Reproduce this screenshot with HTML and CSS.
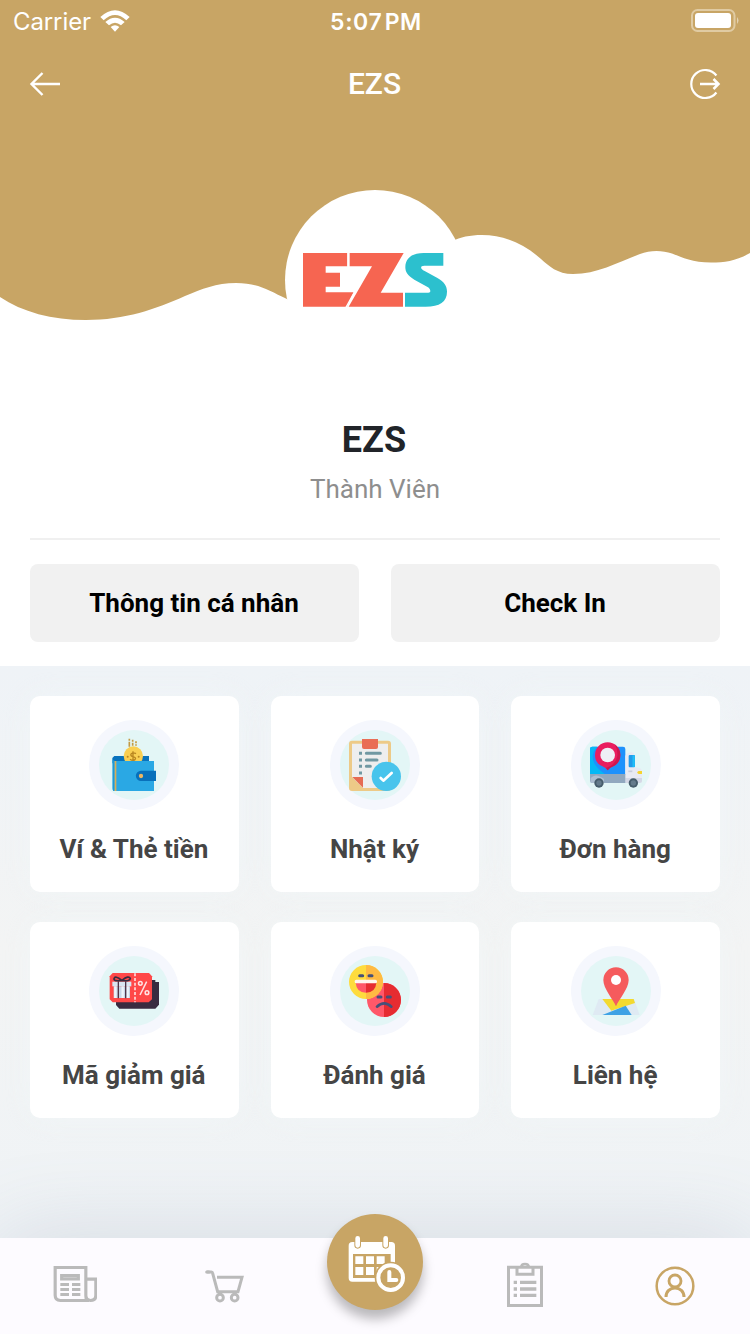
FILE: index.html
```html
<!DOCTYPE html>
<html lang="vi">
<head>
<meta charset="utf-8">
<title>EZS</title>
<link rel="stylesheet" href="styles.css">
</head>
<body>
<div class="app">
  <header class="hero">
    <svg class="wave" viewBox="0 0 750 330"><path fill="#c8a565" d="M0 0H750V253C736 261 725 262.500 711 262.500C692 262.500 681 257 672 253.500C662 250 650 250 640 254C616 263 597 274 573 274C557 274 549 266 541 259C523 243 503 235 482 235C440 235 430 262 405 283C375 308 312 318 287 299C268 290 258 283 236 283C216 283 202 289 185 296C156 309 125 320 86 320C52 320 22 312 0 297Z"/></svg>
    <div class="status">
      <div class="carrier"><span>Carrier</span>
        <svg width="30" height="22" viewBox="0 0 90 66" fill="#fff"><path d="M1 21Q45-20 89 21L79 31Q45-1 11 31Z"/><path d="M16 36Q45 10 74 36L63 46Q45 31 27 46Z"/><path d="M32 51Q45 41 58 51L45 65Z"/></svg>
      </div>
      <div class="time">5:07 PM</div>
      <div class="battery"><svg width="48" height="24" viewBox="0 0 48 24"><rect x="1" y="1" width="42.500" height="21" rx="5.500" fill="none" stroke="#e0cba3" stroke-width="2"/><rect x="4" y="4" width="36" height="15" rx="3" fill="#fff"/><path d="M46 8Q49 11.500 46 15Z" fill="#e4d2b0"/></svg></div>
    </div>
    <nav class="topbar">
      <svg width="32" height="24" viewBox="0 0 32 24" fill="none" stroke="#fff" stroke-width="2.400"><path d="M31 12H3M13.500 1L2.500 12L13.500 23"/></svg>
      <h1>EZS</h1>
      <svg width="32" height="32" viewBox="0 0 32 32" fill="none" stroke="#fff" stroke-width="2.200"><path d="M27.400 7.500A14 14 0 1 0 27.400 24.500"/><path d="M11 16H29M24.500 11L29.500 16L24.500 21" stroke-width="2.500"/></svg>
    </nav>
    <div class="avatar">
      <svg width="146" height="56" viewBox="0 0 438 168"><path fill="#f66551" d="M3 3H136V43H71V62H114V104H71V121H155L135 164H3Z"/><path fill="#f66551" d="M143 3H305L236 122H303V164H140L210 43H143Z"/><path fill="#2cc0ce" d="M424 3V41H367C353 41 355 51 368 57L405 77C426 88 435 101 435 119C435 149 413 164 371 164H309V122H379C388 122 386 111 378 106L337 83C316 71 310 59 310 46C310 17 332 3 365 3Z"/><path d="M158 119L132 166M138 3V44M306 121V166" stroke="#fff" stroke-width="4"/></svg>
    </div>
  </header>

  <section class="profile">
    <h2>EZS</h2>
    <p>Thành Viên</p>
    <div class="actions"><button>Thông tin cá nhân</button><button>Check In</button></div>
  </section>

  <main class="menu">
    <a class="card">
      <svg class="badge" viewBox="27 30 270 270"><circle class="ring" cx="162" cy="165" r="135"/><circle class="disc" cx="162" cy="165" r="105"/>
        <path d="M103 138H207V160H97V144Z" fill="#0872bd"/><path d="M148 86V110M158 89V107M168 94V107" stroke="#c39a44" stroke-width="5" stroke-dasharray="6 3 20"/><circle cx="160" cy="138" r="29" fill="#f9cf52"/><circle cx="143" cy="140" r="3" fill="#b98620"/><circle cx="176" cy="140" r="3" fill="#b98620"/><path d="M168 131Q160 126 154 131Q149 137 159 140Q170 143 165 149Q158 154 150 148M159 124V155" fill="none" stroke="#b98620" stroke-width="4"/><path d="M97 147Q99 153 106 153H222V243H104Q97 243 97 235Z" fill="#2aa8e4"/><path d="M101 153V243" stroke="#2196d0" stroke-width="3"/><path d="M106.500 153V243" stroke="#d9ae58" stroke-width="5"/><path d="M183 182H228V213H183A15.500 15.500 0 0 1 183 182Z" fill="#0870bb"/><circle cx="183" cy="198" r="6.500" fill="#ecb662"/></svg>
      <span>Ví &amp; Thẻ tiền</span>
    </a>
    <a class="card">
      <svg class="badge" viewBox="30 30 270 270"><circle class="ring" cx="165" cy="165" r="135"/><circle class="disc" cx="165" cy="165" r="105"/>
        <rect x="87" y="92" width="126" height="151" rx="9" fill="#edca87"/><path d="M96 101H204V234H129L96 201Z" fill="#eee"/><path d="M97 201H129V233Z" fill="#e56b53"/><path d="M126 87H174V111Q174 117 168 117H132Q126 117 126 111Z" fill="#e96e55"/><path d="M117 130H126M117 150H126M117 169H126M117 189H126" stroke="#7098a2" stroke-width="9"/><path d="M139 130H181M139 150H171M139 169H151" stroke="#7098a2" stroke-width="9" stroke-linecap="round"/><circle cx="199" cy="199" r="44" fill="#48c4ec"/><path d="M182 204L190 212L215 189" fill="none" stroke="#fff" stroke-width="8" stroke-linecap="round" stroke-linejoin="round"/></svg>
      <span>Nhật ký</span>
    </a>
    <a class="card">
      <svg class="badge" viewBox="33 30 270 270"><circle class="ring" cx="168" cy="165" r="135"/><circle class="disc" cx="168" cy="165" r="105"/>
        <path d="M97 110H189Q196 110 196 117V194H90V117Q90 110 97 110Z" fill="#1e91fc"/><path d="M97 110H112Q90 132 103 160Q111 176 137 194H90V117Q90 110 97 110Z" fill="#05b8f5"/><path d="M196 218V137Q208 120 222 130V171L240 175Q246 178 246 188V213Q246 219 239 219Z" fill="#e9eaf3"/><path d="M196 204H246V213Q246 219 239 219H196Z" fill="#d5d8e6"/><rect x="206" y="135" width="19" height="37" rx="3" fill="#229bea"/><path d="M221 136V171" stroke="#21bef8" stroke-width="7"/><path d="M90 192H196V219H98Q90 219 90 210Z" fill="#91a8bf"/><path d="M92 204Q107 187 132 207V219H92Z" fill="#aebfd1"/><path d="M205 184H217" stroke="#c9cedd" stroke-width="5"/><path d="M236 183H246V192H236Q227 187 236 183Z" fill="#f6d32e"/><circle cx="117" cy="219" r="14" fill="#465d6b"/><circle cx="117" cy="219" r="8" fill="#647b8b"/><circle cx="220" cy="219" r="14" fill="#465d6b"/><circle cx="220" cy="219" r="8" fill="#647b8b"/><path d="M143 181Q136 172 126 168C110 161 105 149 105 135A38 38 0 0 1 181 135C181 154 171 163 160 169Q150 172 143 181Z" fill="#e91e5f"/><path d="M164 103Q181 115 181 135C181 154 171 163 160 169Q150 172 143 181L138 174Q168 164 172 138Q174 119 164 103Z" fill="#ce174f"/><circle cx="143" cy="135" r="22" fill="#eef0f6"/></svg>
      <span>Đơn hàng</span>
    </a>
    <a class="card">
      <svg class="badge" viewBox="27 30 270 270"><circle class="ring" cx="162" cy="165" r="135"/><circle class="disc" cx="162" cy="165" r="105"/>
        <path d="M118 132H226V138H237V206L226 218H118L108 207V132Z" fill="#382b40"/><path d="M98 111H207L216 121V190L206 199H98L89 190V121Z" fill="#ff4848"/><path d="M165 112V199" stroke="#fff" stroke-width="4" stroke-dasharray="9 5"/><path d="M101 151H150V186H101Z" fill="#c7d5e6"/><path d="M106 151V186M128 151V186M143 151V186" stroke="#eef3fa" stroke-width="7"/><path d="M97 137H154V151H97Z" fill="#d9e5f1"/><path d="M115 136V187M137 136V187" stroke="#503548" stroke-width="4"/><path d="M126 133Q101 137 102 128Q105 117 126 133ZM126 133Q151 137 151 127Q146 117 126 133Z" fill="none" stroke="#392c40" stroke-width="5"/><path d="M200 137L180 177" stroke="#ffe3e3" stroke-width="4.500"/><circle cx="181" cy="142" r="5.500" fill="none" stroke="#ffe3e3" stroke-width="4.500"/><circle cx="201" cy="170" r="5.500" fill="none" stroke="#ffe3e3" stroke-width="4.500"/></svg>
      <span>Mã giảm giá</span>
    </a>
    <a class="card">
      <svg class="badge" viewBox="30 30 270 270"><circle class="ring" cx="165" cy="165" r="135"/><circle class="disc" cx="165" cy="165" r="105"/>
        <circle cx="192" cy="192" r="51" fill="#ff5869"/><path d="M192 141A51 51 0 0 1 192 243Z" fill="#e62c31"/><circle cx="138" cy="138" r="51" fill="#fedc3d"/><path d="M138 87A51 51 0 0 1 138 189Z" fill="#ffba42"/><path d="M119 119H128M147 119H156M174 183H183M202 183H211" stroke="#455079" stroke-width="9" stroke-linecap="round"/><path d="M107 140H138V170Q109 169 107 140Z" fill="#ff5869"/><path d="M138 140H169Q167 169 138 170Z" fill="#e62c31"/><rect x="104" y="131" width="67" height="11" rx="5" fill="#fff5ef"/><path d="M171 212Q192 192 214 212" fill="none" stroke="#455079" stroke-width="8" stroke-linecap="round"/></svg>
      <span>Đánh giá</span>
    </a>
    <a class="card">
      <svg class="badge" viewBox="33 30 270 270"><circle class="ring" cx="168" cy="165" r="135"/><circle class="disc" cx="168" cy="165" r="105"/>
        <path d="M116 189H222L239 237H98Z" fill="#dfeaf3"/><path d="M127 189H221L225 201L154 224Z" fill="#f3da30"/><path d="M127 237L197 209L215 237Z" fill="#3ea2e5"/><path fill="#f55b5d" d="M168 211C158 188 130 158 130 132A38 38 0 0 1 206 132C206 158 178 188 168 211Z"/><circle cx="168" cy="132" r="15" fill="#fff"/></svg>
      <span>Liên hệ</span>
    </a>
  </main>

  <footer class="tabs">
    <a><svg class="news" width="44" height="38" viewBox="0 0 132 114" fill="none" stroke="#bababa" stroke-width="9.500"><path d="M6.500 7.500H98.500V92Q98.500 106.500 108 106.500H22Q6.500 106.500 6.500 91ZM98 42.500H128.500V91Q128.500 106.500 113 106.500Q98.500 106.500 98.500 91"/><path d="M26 32H76V42H26ZM22 58.500H48M57 58.500H82M22 73.500H48M57 73.500H82M22 88.500H48M57 88.500H82"/></svg></a>
    <a><svg width="40" height="34" viewBox="0 0 120 102" fill="none" stroke="#bababa" stroke-width="9"><path d="M5 9H19Q22 9 23 13L38 68H99L111 25H36"/><path d="M5 9H12" stroke-linecap="round"/><circle cx="45" cy="86" r="10"/><circle cx="89" cy="86" r="10"/></svg></a>
    <a class="booking"><svg width="60" height="60" viewBox="0 0 180 180"><path fill="#fff" d="M16 24H133Q144 24 144 35V96H131V60H18V132H96V143H16Q5 143 5 132V35Q5 24 16 24Z"/><path d="M25 67H49V90H25ZM57 67H81V90H57ZM89 67H113V90H89ZM25 99H49V123H25ZM57 99H81V123H57ZM89 99H113V123H89Z" fill="#fff"/><path d="M32 13V34M116 13V34" stroke="#c8a565" stroke-width="20" stroke-linecap="round"/><path d="M32 13V34M116 13V34" stroke="#fff" stroke-width="14" stroke-linecap="round"/><circle cx="131" cy="131" r="48" fill="#c8a565"/><circle cx="131" cy="131" r="37" fill="none" stroke="#fff" stroke-width="12"/><path d="M127 114V138H148" fill="none" stroke="#fff" stroke-width="12" stroke-linecap="round"/></svg></a>
    <a><svg class="list" width="36" height="46" viewBox="0 0 108 138" fill="none" stroke="#bababa" stroke-width="9"><path d="M4.500 19H103.500V133.500H4.500Z"/><path d="M30 16V40H78V16"/><path d="M43 18Q43 9 54 9T65 18" stroke-width="8"/><path d="M20 64H30M39 64H88M20 84H30M39 84H88M20 103H30M39 103H88" stroke-width="10"/></svg></a>
    <a><svg width="40" height="40" viewBox="0 0 120 120" fill="none" stroke="#c8a565" stroke-width="7.500"><circle cx="60" cy="60" r="55"/><circle cx="60" cy="45" r="18" stroke-width="8.500"/><path d="M33 93C33 76 45 66 60 66S87 76 87 93" stroke-width="9"/></svg></a>
  </footer>
</div>
</body>
</html>
```
FILE: styles.css
```css
* { box-sizing: border-box; }
body { margin: 0; font-family: Roboto, "Noto Sans", sans-serif; }
.app { width: 750px; height: 1334px; display: flex; flex-direction: column; background: #fff; overflow: hidden; }
.hero { position: relative; height: 410px; display: flex; flex-direction: column; align-items: center; color: #fff; }
.wave { position: absolute; top: 0; left: 0; width: 750px; height: 330px; }
.status { position: relative; width: 100%; height: 40px; padding: 0 11px 0 13px; display: grid; grid-template-columns: 1fr auto 1fr; align-items: center; font: 24px/40px Inter, sans-serif; }
.carrier { display: flex; align-items: center; gap: 9px; }
.carrier span { letter-spacing: -.1px; padding-top: 2px; }
.time { font-weight: 600; font-size: 23px; letter-spacing: .6px; word-spacing: -4px; padding-top: 2px; }
.battery { display: flex; justify-content: flex-end; }
.topbar { position: relative; width: 100%; height: 88px; padding: 0 29px; display: flex; align-items: center; justify-content: space-between; }
.topbar h1 { margin: 0; padding-right: 1px; font-size: 30px; line-height: 40px; font-weight: 500; }
.avatar { position: relative; margin-top: 62px; width: 180px; height: 180px; flex: none; border-radius: 50%; background: #fff; display: flex; align-items: center; justify-content: center; }
.profile { height: 256px; padding: 8px 30px 24px; text-align: center; display: flex; flex-direction: column; }
.profile h2 { margin: 0; padding-right: 2px; font-size: 36px; line-height: 44px; font-weight: 700; color: #212429; }
.profile p { margin: 8px 0 0; font-size: 26px; line-height: 38px; height: 68px; color: #8e8e8e; }
.actions { border-top: 2px solid #f0f0f0; padding-top: 24px; display: grid; grid-template-columns: 1fr 1fr; gap: 32px; }
.actions button { height: 78px; border: 0; border-radius: 8px; background: #f1f1f1; font: 700 26px/30px Roboto, sans-serif; color: #000; padding: 0 1px 0 0; }
.menu { flex: 1; padding: 30px; display: grid; grid-template-columns: repeat(3, 1fr); grid-auto-rows: 196px; gap: 30px 32px; align-content: start; background: linear-gradient(#eff3f7, #f3f4f4 50%, #eff3f6); }
.card { background: #fff; border-radius: 10px; padding-top: 24px; display: flex; flex-direction: column; align-items: center; gap: 20px; box-shadow: 0 0 30px rgba(240, 246, 248, .6); }
.card span { padding-right: 1px; font-size: 26px; line-height: 38px; font-weight: 700; color: #454545; }
.badge { width: 90px; height: 90px; }
.ring { fill: #f5f7fd; }
.disc { fill: #e3f6f6; }
.tabs { position: relative; height: 96px; display: grid; grid-template-columns: repeat(5, 1fr); align-items: center; justify-items: center; background: #fdfbff; box-shadow: 0 0 90px rgba(110, 120, 150, .2); }
.tabs a { display: flex; }
.tabs .news { margin-top: -4px; }
.tabs .list { margin-top: -4px; }
.tabs .booking { width: 96px; height: 96px; margin-top: -48px; border-radius: 50%; background: #c8a565; box-shadow: 0 9px 12px rgba(0, 0, 0, .27); padding: 20px 0 0 20px; }
```
